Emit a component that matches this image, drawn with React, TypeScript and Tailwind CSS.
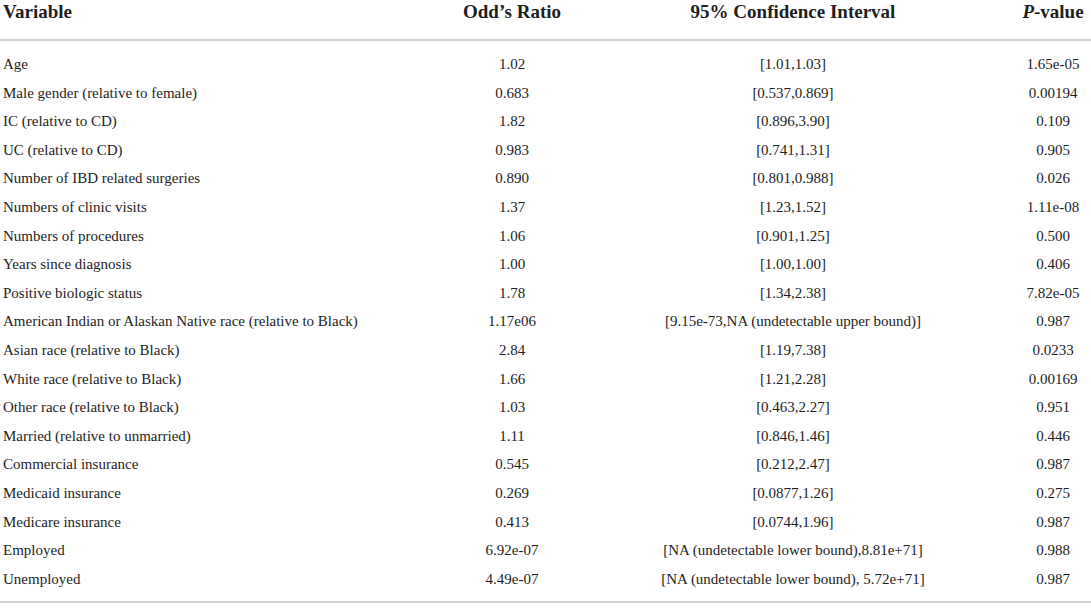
const rows = [
  ["Age", "1.02", "[1.01,1.03]", "1.65e-05"],
  ["Male gender (relative to female)", "0.683", "[0.537,0.869]", "0.00194"],
  ["IC (relative to CD)", "1.82", "[0.896,3.90]", "0.109"],
  ["UC (relative to CD)", "0.983", "[0.741,1.31]", "0.905"],
  ["Number of IBD related surgeries", "0.890", "[0.801,0.988]", "0.026"],
  ["Numbers of clinic visits", "1.37", "[1.23,1.52]", "1.11e-08"],
  ["Numbers of procedures", "1.06", "[0.901,1.25]", "0.500"],
  ["Years since diagnosis", "1.00", "[1.00,1.00]", "0.406"],
  ["Positive biologic status", "1.78", "[1.34,2.38]", "7.82e-05"],
  ["American Indian or Alaskan Native race (relative to Black)", "1.17e06", "[9.15e-73,NA (undetectable upper bound)]", "0.987"],
  ["Asian race (relative to Black)", "2.84", "[1.19,7.38]", "0.0233"],
  ["White race (relative to Black)", "1.66", "[1.21,2.28]", "0.00169"],
  ["Other race (relative to Black)", "1.03", "[0.463,2.27]", "0.951"],
  ["Married (relative to unmarried)", "1.11", "[0.846,1.46]", "0.446"],
  ["Commercial insurance", "0.545", "[0.212,2.47]", "0.987"],
  ["Medicaid insurance", "0.269", "[0.0877,1.26]", "0.275"],
  ["Medicare insurance", "0.413", "[0.0744,1.96]", "0.987"],
  ["Employed", "6.92e-07", "[NA (undetectable lower bound),8.81e+71]", "0.988"],
  ["Unemployed", "4.49e-07", "[NA (undetectable lower bound), 5.72e+71]", "0.987"],
];

const cols = "grid grid-cols-[420px_184px_378px_1fr]";

export default function App() {
  return (
    <div className="w-[1091px] h-[609px] bg-white text-[#1e1e1e] font-['Liberation_Serif',serif] overflow-hidden">
      <div className={`${cols} h-[41px] border-b-2 border-[#d0d0d0] text-[19px] font-bold leading-[22px] pt-[1px]`}>
        <div className="pl-[3px]">Variable</div>
        <div className="text-center">Odd’s Ratio</div>
        <div className="text-center">95% Confidence Interval</div>
        <div className="pl-[33px] text-center whitespace-nowrap">
          <i>P</i>-value
        </div>
      </div>
      <div className="pt-[9px] pb-[8px] border-b-2 border-[#d0d0d0] text-[15px]">
        {rows.map((r) => (
          <div key={r[0]} className={`${cols} h-[28.6px] items-center`}>
            <div className="pl-[3px] whitespace-nowrap">{r[0]}</div>
            <div className="text-center">{r[1]}</div>
            <div className="text-center whitespace-nowrap">{r[2]}</div>
            <div className="pl-[33px] text-center whitespace-nowrap">{r[3]}</div>
          </div>
        ))}
      </div>
    </div>
  );
}
